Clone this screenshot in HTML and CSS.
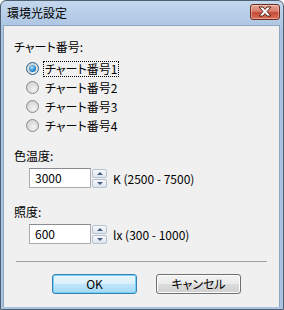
FILE: index.html
```html
<!DOCTYPE html>
<html>
<head>
    <title>環境光設定</title>
    <link rel="stylesheet" href="styles.css">
</head>
<body>
    <div class="window">
        <div class="titlebar">
            <span class="title">環境光設定</span>
            <div class="close">
                <svg width="16" height="11" viewBox="0 0 16 11">
                    <path d="M2 1 L6 1 L8 3.5 L10 1 L14 1 L10 5.5 L14 10 L10 10 L8 7.5 L6 10 L2 10 L6 5.5 Z"
                          fill="#fff" stroke="#5a2218" stroke-width="1" stroke-linejoin="round"/>
                </svg>
            </div>
        </div>

        <div class="client">
            <div class="label">チャート番号:</div>
            <div class="radios">
                <div class="radio checked"><span class="circle"><span class="dot"></span></span><span class="text focus">チャート番号1</span></div>
                <div class="radio"><span class="circle"></span><span class="text">チャート番号2</span></div>
                <div class="radio"><span class="circle"></span><span class="text">チャート番号3</span></div>
                <div class="radio"><span class="circle"></span><span class="text">チャート番号4</span></div>
            </div>

            <div class="label group">色温度:</div>
            <div class="field">
                <div class="input">3000</div>
                <div class="spin">
                    <span class="spin-btn"><span class="arrow up"></span></span>
                    <span class="spin-btn"><span class="arrow down"></span></span>
                </div>
                <span class="range">K (2500 - 7500)</span>
            </div>

            <div class="label group">照度:</div>
            <div class="field">
                <div class="input">600</div>
                <div class="spin">
                    <span class="spin-btn"><span class="arrow up"></span></span>
                    <span class="spin-btn"><span class="arrow down"></span></span>
                </div>
                <span class="range">lx (300 - 1000)</span>
            </div>

            <div class="separator"></div>

            <div class="buttons">
                <div class="btn default">OK</div>
                <div class="btn">キャンセル</div>
            </div>
        </div>
    </div>
</body>
</html>
```

FILE: styles.css
```css
body { margin: 0; font-family: "Noto Sans CJK JP", sans-serif; font-size: 12px; color: #000; }

.window {
    width: 284px;
    height: 310px;
    box-sizing: border-box;
    border: 1px solid #4f6072;
    border-radius: 6px 6px 0 0;
    background: linear-gradient(#c4d7ed, #a9c3e1 30px, #a9c3e1);
    padding: 0 3px 2px 2px;
    display: flex;
    flex-direction: column;
}

.titlebar {
    height: 24px;
    display: flex;
    align-items: center;
    justify-content: space-between;
    flex-shrink: 0;
}
.title { margin-left: 4px; margin-top: -1px; font-size: 12px; }

.close {
    width: 30px;
    height: 16px;
    margin-top: -3px;
    box-sizing: border-box;
    border: 1px solid #6e2b20;
    border-radius: 3px;
    background: linear-gradient(#e8a595, #d77d6a 45%, #c64a36 55%, #d8705a);
    display: flex;
    align-items: center;
    justify-content: center;
    box-shadow: inset 0 0 0 1px rgba(255, 255, 255, 0.35);
}

.client {
    flex: 1;
    background: #f0f0f0;
    border: 1px solid #8fa6c0;
    border-bottom: none;
    padding: 14px 0 0 10px;
    display: flex;
    flex-direction: column;
    font-feature-settings: "palt";
}

.label { height: 14px; line-height: 14px; }
.label.group { margin-top: 14px; }
.field + .label.group { margin-top: 17px; }

.radios { margin-top: 5px; display: flex; flex-direction: column; }
.radio { height: 19px; display: flex; align-items: center; padding-left: 12px; }
.circle {
    width: 13px;
    height: 13px;
    box-sizing: border-box;
    border-radius: 50%;
    border: 1px solid #8a8a8a;
    background: radial-gradient(circle at 60% 65%, #f4f4f4, #d5d5d5 70%, #c4c4c4);
    display: flex;
    align-items: center;
    justify-content: center;
    flex-shrink: 0;
}
.radio.checked .circle { border-color: #2c628b; }
.dot {
    width: 7px;
    height: 7px;
    border-radius: 50%;
    background: radial-gradient(circle at 40% 35%, #b6e0fb, #2a8ad4 55%, #0d4f8b);
}
.text { margin-left: 4px; line-height: 14px; padding: 0 1px; border: 1px dotted transparent; }
.text.focus { border-color: #000; }

.field { margin-top: 5px; display: flex; align-items: center; padding-left: 15px; }
.input {
    width: 62px;
    height: 20px;
    box-sizing: border-box;
    border: 1px solid #abadb3;
    border-top-color: #8a8c93;
    background: #fff;
    padding-left: 5px;
    line-height: 18px;
}
.spin { margin-left: 1px; display: flex; flex-direction: column; gap: 1px; }
.spin-btn {
    width: 15px;
    height: 9px;
    box-sizing: border-box;
    border: 1px solid #b5c3d3;
    border-radius: 2px;
    background: linear-gradient(#f7f9fb, #dfe5ec);
    display: flex;
    align-items: center;
    justify-content: center;
}
.arrow { width: 0; height: 0; border-left: 3px solid transparent; border-right: 3px solid transparent; }
.arrow.up { border-bottom: 3px solid #4a5f86; }
.arrow.down { border-top: 3px solid #4a5f86; }
.range { margin-left: 6px; }

.separator { margin: 17px 12px 0 2px; border-top: 1px solid #a0a0a0; }

.buttons { margin-top: 12px; display: flex; justify-content: center; gap: 19px; }
.btn {
    width: 85px;
    height: 20px;
    box-sizing: border-box;
    border: 1px solid #707070;
    border-radius: 3px;
    background: linear-gradient(#f2f2f2, #ebebeb 50%, #dddddd 50%, #cfcfcf);
    box-shadow: inset 0 0 0 1px #fcfcfc;
    text-align: center;
    line-height: 18px;
}
.btn.default {
    border-color: #3c7fb1;
    background: linear-gradient(#eaf6fd, #d9f0fc 50%, #bee6fd 50%, #a7d9f5);
    box-shadow: inset 0 0 0 1px #6fd3fb;
}
```
